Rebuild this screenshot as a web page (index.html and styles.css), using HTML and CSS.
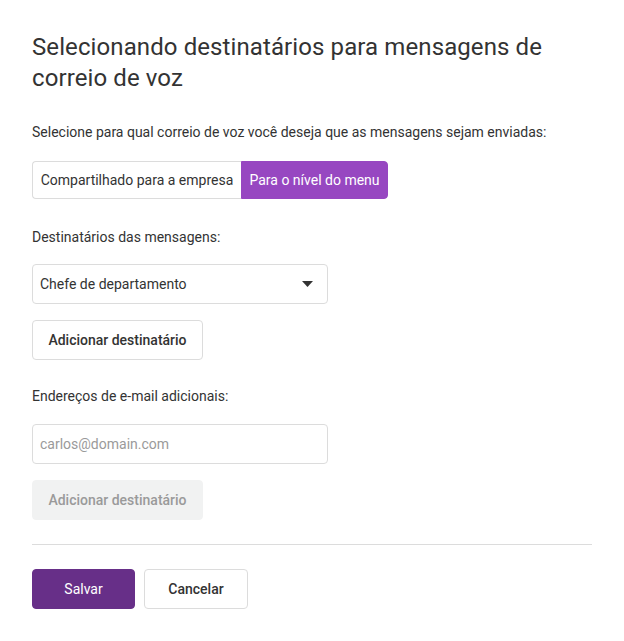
FILE: index.html
```html
<!DOCTYPE html>
<html lang="pt">
<head>
<meta charset="utf-8">
<link rel="stylesheet" href="styles.css">
</head>
<body>
<div class="page">
  <h1 class="title">Selecionando destinatários para mensagens de correio de voz</h1>
  <p class="label first">Selecione para qual correio de voz você deseja que as mensagens sejam enviadas:</p>
  <div class="segment">
    <button class="seg">Compartilhado para a empresa</button>
    <button class="seg active">Para o nível do menu</button>
  </div>
  <p class="label">Destinatários das mensagens:</p>
  <div class="select">
    <span>Chefe de departamento</span>
    <svg class="caret" width="11" height="6" viewBox="0 0 11 6"><path d="M0 0h11L5.5 6z" fill="#333"/></svg>
  </div>
  <button class="btn">Adicionar destinatário</button>
  <p class="label">Endereços de e-mail adicionais:</p>
  <div class="input">carlos@domain.com</div>
  <button class="btn disabled">Adicionar destinatário</button>
  <hr class="divider">
  <div class="actions">
    <button class="btn primary">Salvar</button>
    <button class="btn cancel">Cancelar</button>
  </div>
</div>
</body>
</html>
```

FILE: styles.css
```css
* { box-sizing: border-box; }
html, body { margin: 0; background: #fff; }
body { font-family: Roboto, "Noto Sans", sans-serif; color: #333; }
.page { padding: 32px 32px 0 32px; display: flex; flex-direction: column; align-items: flex-start; }
.title { font-size: 24px; font-weight: 400; line-height: 31px; margin: 0; color: #333; width: 560px; letter-spacing: 0.1px; }
.label { font-size: 14px; line-height: 20px; margin: 0; color: #333; }
.label.first { margin-top: 28px; }
.segment { display: flex; margin-top: 19px; }
.seg { font-family: inherit; font-size: 14px; height: 38px; padding: 0; border: 1px solid #dcdcdc; background: #fff; color: #333; white-space: nowrap; }
.seg:first-child { border-radius: 4px 0 0 4px; border-right: none; width: 209px; }
.seg.active { background: #9747c1; border-color: #9747c1; color: #fff; border-radius: 0 4px 4px 0; width: 147px; }
.segment + .label { margin-top: 28px; }
.select { margin-top: 17px; width: 296px; height: 40px; border: 1px solid #dcdcdc; border-radius: 4px; display: flex; align-items: center; justify-content: space-between; padding: 0 14px 0 7px; font-size: 14px; }
.caret { display: block; }
.btn { font-family: inherit; font-size: 14px; font-weight: 500; height: 40px; border-radius: 4px; border: 1px solid #dcdcdc; background: #fff; color: #333; padding: 0 15px; white-space: nowrap; }
.select + .btn { margin-top: 16px; width: 171px; }
.btn + .label { margin-top: 26px; }
.input { margin-top: 18px; width: 296px; height: 40px; border: 1px solid #dcdcdc; border-radius: 4px; display: flex; align-items: center; padding: 0 7px; font-size: 14px; color: #9a9a9a; }
.btn.disabled { margin-top: 16px; width: 171px; background: #f1f2f2; border-color: #f1f2f2; color: #9a9a9a; }
.divider { align-self: stretch; border: none; border-top: 1px solid #dcdcdc; margin: 24px 0 0 0; }
.actions { display: flex; gap: 9px; margin-top: 24px; }
.btn.primary { background: #672f88; border-color: #672f88; color: #fff; width: 103px; font-weight: 400; }
.btn.cancel { width: 104px; }
```
